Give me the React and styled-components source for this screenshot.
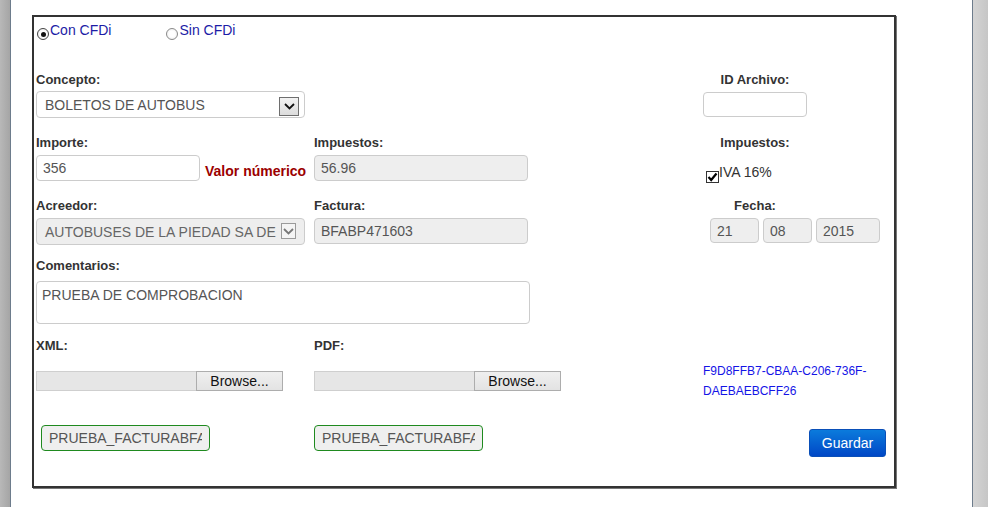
import React from 'react';
import styled, { createGlobalStyle } from 'styled-components';

const GlobalStyle = createGlobalStyle`
  html, body, #root {
    height: 100%;
    margin: 0;
  }
  body {
    font-family: "Liberation Sans", Arial, sans-serif;
    background: #fff;
  }
`;

const Page = styled.div`
  display: flex;
  height: 100vh;
  overflow: hidden;
`;

const LeftRail = styled.div`
  flex: none;
  width: 10px;
  background: linear-gradient(to right, #b8b8b8, #a5a5a5);
  border-right: 1px solid #6d7c8c;
`;

const RightRail = styled.div`
  flex: none;
  width: 15px;
  background: linear-gradient(to right, #d4d4d4, #c6c6c6);
  border-left: 1px solid #6d7c8c;
`;

const Main = styled.div`
  flex: 1;
  background: #fff;
  padding: 15px 0 0 21px;
`;

const FormBox = styled.div`
  width: 864px;
  height: 473px;
  box-sizing: border-box;
  border: 2px solid #333;
  box-shadow: 1px 1px 0 #777;
  padding-left: 2px;
`;

const RadioRow = styled.div`
  display: flex;
  gap: 55px;
  margin-top: 5px;
  padding-left: 1px;
  height: 16px;
`;

const RadioOption = styled.label`
  display: flex;
  align-items: flex-start;
  font-size: 14px;
  line-height: 16px;
  color: #1c1ca6;
`;

const RadioCircle = styled.span`
  box-sizing: border-box;
  width: 12px;
  height: 12px;
  margin-top: 6px;
  margin-right: 1px;
  border-radius: 50%;
  border: 1px solid ${p => (p.$checked ? '#444' : '#8a8a8a')};
  background: radial-gradient(circle, #fff 40%, #e6e6e6);
  display: flex;
  align-items: center;
  justify-content: center;
  &::after {
    content: '';
    display: ${p => (p.$checked ? 'block' : 'none')};
    width: 5px;
    height: 5px;
    border-radius: 50%;
    background: #111;
  }
`;

const Row = styled.div`
  display: grid;
  grid-template-columns: 278px 389px 1fr;
  align-items: start;
  margin-top: ${p => p.$mt}px;
`;

const Field = styled.div`
  display: flex;
  flex-direction: column;
  align-items: flex-start;
  grid-column: ${p => p.$span || 'auto'};
`;

/* line-height is kept short so the bold text sits a little high, as in the original */
const Label = styled.span`
  display: block;
  font-size: 13px;
  font-weight: bold;
  line-height: 11px;
  padding-top: 1px;
  color: #333;
  margin-bottom: ${p => p.$gap + 3}px;
  width: ${p => (p.$center ? '104px' : 'auto')};
  text-align: ${p => (p.$center ? 'center' : 'left')};
`;

const TextInput = styled.input`
  box-sizing: border-box;
  width: ${p => p.$w}px;
  height: ${p => p.$h || 26}px;
  margin: 0 0 0 ${p => p.$ml || 0}px;
  padding: 0 6px;
  border: 1px solid #ccc;
  border-radius: 4px;
  background: ${p => (p.$muted ? '#eee' : '#fff')};
  font-family: "Liberation Sans", Arial, sans-serif;
  font-size: 14px;
  color: #555;
  outline: none;
`;

const InlineGroup = styled.div`
  display: flex;
  align-items: flex-start;
  gap: ${p => p.$gap || 0}px;
  margin-left: ${p => p.$ml || 0}px;
  margin-top: ${p => p.$mt || 0}px;
`;

const ErrorText = styled.span`
  margin-left: 5px;
  padding-top: 8px;
  font-size: 14px;
  font-weight: bold;
  line-height: 16px;
  color: #9b0000;
  white-space: nowrap;
`;

const SelectBox = styled.div`
  box-sizing: border-box;
  width: 269px;
  height: 27px;
  display: flex;
  align-items: center;
  padding: 0 ${p => (p.$disabled ? 8 : 5)}px 0 8px;
  border: 1px solid #ccc;
  border-radius: 4px;
  background: ${p => (p.$disabled ? '#eee' : '#fff')};
  font-size: 14px;
  color: ${p => (p.$disabled ? '#666' : '#555')};
`;

const SelectText = styled.span`
  flex: 1;
  white-space: nowrap;
`;

const ArrowBox = styled.span`
  flex: none;
  box-sizing: border-box;
  width: ${p => (p.$disabled ? 15 : 20)}px;
  height: ${p => (p.$disabled ? 16 : 19)}px;
  margin-left: 2px;
  margin-top: ${p => (p.$disabled ? -1 : 3)}px;
  display: flex;
  align-items: center;
  justify-content: center;
  border: 1px solid ${p => (p.$disabled ? '#9a9a9a' : '#6e6e6e')};
  background: ${p => (p.$disabled ? '#f4f4f4' : 'linear-gradient(#f2f2f2, #dcdcdc)')};
`;

const CheckRow = styled.label`
  display: flex;
  align-items: flex-start;
  height: 16px;
  margin: 13px 0 0 3px;
  font-size: 14px;
  line-height: 16px;
  color: #333;
`;

const CheckBox = styled.span`
  flex: none;
  box-sizing: border-box;
  width: 13px;
  height: 12px;
  margin-top: 7px;
  border: 1px solid #333;
  background: #fff;
  display: flex;
  align-items: center;
  justify-content: center;
`;

const TextArea = styled.textarea`
  box-sizing: border-box;
  width: 494px;
  height: 43px;
  margin: 0;
  padding: 5px 5px;
  border: 1px solid #ccc;
  border-radius: 4px;
  resize: none;
  font-family: "Liberation Sans", Arial, sans-serif;
  font-size: 14px;
  line-height: 16px;
  color: #555;
  outline: none;
`;

const FilePicker = styled.div`
  display: flex;
  height: 20px;
`;

const FileBar = styled.span`
  box-sizing: border-box;
  width: 160px;
  height: 20px;
  border: 1px solid #cfcfcf;
  border-right: none;
  background: #e6e6e6;
`;

const BrowseButton = styled.button`
  box-sizing: border-box;
  width: 87px;
  height: 20px;
  margin: 0;
  padding: 0;
  border: 1px solid #adadad;
  background: linear-gradient(#efefef, #e3e3e3);
  font-family: "Liberation Sans", Arial, sans-serif;
  font-size: 14px;
  line-height: 17px;
  color: #111;
`;

const HashText = styled.div`
  margin-top: 22px;
  font-size: 12px;
  line-height: 20px;
  color: #1414e6;
`;

const FileNameButton = styled.input`
  box-sizing: border-box;
  width: 169px;
  height: 26px;
  margin: 0 0 0 ${p => p.$ml || 0}px;
  padding: 0 7px;
  border: 1px solid #1f8a1f;
  border-radius: 4px;
  background: #efefef;
  font-family: "Liberation Sans", Arial, sans-serif;
  font-size: 14px;
  color: #555;
  outline: none;
`;

const SaveButton = styled.button`
  box-sizing: border-box;
  width: 77px;
  height: 28px;
  margin: 4px 0 0 106px;
  padding: 0;
  border: 1px solid #0a4fb8;
  border-radius: 3px;
  background: linear-gradient(#0b7bdc, #0047c6);
  font-family: "Liberation Sans", Arial, sans-serif;
  font-size: 14px;
  color: #fff;
  cursor: pointer;
`;

function Chevron({ color }) {
  return (
    <svg width="11" height="7" viewBox="0 0 11 7">
      <path d="M1 1 L5.5 5.5 L10 1" fill="none" stroke={color} strokeWidth="1.8" />
    </svg>
  );
}

function App() {
  return (
    <Page>
      <GlobalStyle />
      <LeftRail />
      <Main>
        <FormBox>
          <RadioRow>
            <RadioOption>
              <RadioCircle $checked />
              Con CFDi
            </RadioOption>
            <RadioOption>
              <RadioCircle />
              Sin CFDi
            </RadioOption>
          </RadioRow>

          <Row $mt={35}>
            <Field>
              <Label $gap={3}>Concepto:</Label>
              <SelectBox>
                <SelectText>BOLETOS DE AUTOBUS</SelectText>
                <ArrowBox>
                  <Chevron color="#111" />
                </ArrowBox>
              </SelectBox>
            </Field>
            <div />
            <Field>
              <Label $gap={4} $center>ID Archivo:</Label>
              <TextInput $w={104} $h={25} value="" readOnly />
            </Field>
          </Row>

          <Row $mt={18}>
            <Field>
              <Label $gap={4}>Importe:</Label>
              <InlineGroup>
                <TextInput $w={164} value="356" readOnly />
                <ErrorText>Valor númerico</ErrorText>
              </InlineGroup>
            </Field>
            <Field>
              <Label $gap={4}>Impuestos:</Label>
              <TextInput $w={214} $muted value="56.96" readOnly />
            </Field>
            <Field>
              <Label $gap={0} $center>Impuestos:</Label>
              <CheckRow>
                <CheckBox>
                  <svg width="11" height="10" viewBox="0 0 11 10">
                    <path d="M1.5 5 L4.2 8 L9.5 1.5" fill="none" stroke="#000" strokeWidth="2.2" />
                  </svg>
                </CheckBox>
                IVA 16%
              </CheckRow>
            </Field>
          </Row>

          <Row $mt={18}>
            <Field>
              <Label $gap={4}>Acreedor:</Label>
              <SelectBox $disabled>
                <SelectText>AUTOBUSES DE LA PIEDAD SA DE</SelectText>
                <ArrowBox $disabled>
                  <Chevron color="#777" />
                </ArrowBox>
              </SelectBox>
            </Field>
            <Field>
              <Label $gap={4}>Factura:</Label>
              <TextInput $w={214} $muted value="BFABP471603" readOnly />
            </Field>
            <Field>
              <Label $gap={4} $center>Fecha:</Label>
              <InlineGroup $gap={4} $ml={7}>
                <TextInput $w={49} $h={25} $muted value="21" readOnly />
                <TextInput $w={49} $h={25} $muted value="08" readOnly />
                <TextInput $w={64} $h={25} $muted value="2015" readOnly />
              </InlineGroup>
            </Field>
          </Row>

          <Row $mt={14}>
            <Field $span="1 / 3">
              <Label $gap={7}>Comentarios:</Label>
              <TextArea value="PRUEBA DE COMPROBACION" readOnly />
            </Field>
          </Row>

          <Row $mt={15}>
            <Field>
              <Label $gap={17}>XML:</Label>
              <FilePicker>
                <FileBar />
                <BrowseButton>Browse...</BrowseButton>
              </FilePicker>
            </Field>
            <Field>
              <Label $gap={17}>PDF:</Label>
              <FilePicker>
                <FileBar />
                <BrowseButton>Browse...</BrowseButton>
              </FilePicker>
            </Field>
            <HashText>
              F9D8FFB7-CBAA-C206-736F-
              <br />
              DAEBAEBCFF26
            </HashText>
          </Row>

          <Row $mt={24}>
            <Field>
              <FileNameButton $ml={5} value="PRUEBA_FACTURABFABP471603.xml" readOnly />
            </Field>
            <Field>
              <FileNameButton value="PRUEBA_FACTURABFABP471603.pdf" readOnly />
            </Field>
            <Field>
              <SaveButton>Guardar</SaveButton>
            </Field>
          </Row>
        </FormBox>
      </Main>
      <RightRail />
    </Page>
  );
}

export default App;
